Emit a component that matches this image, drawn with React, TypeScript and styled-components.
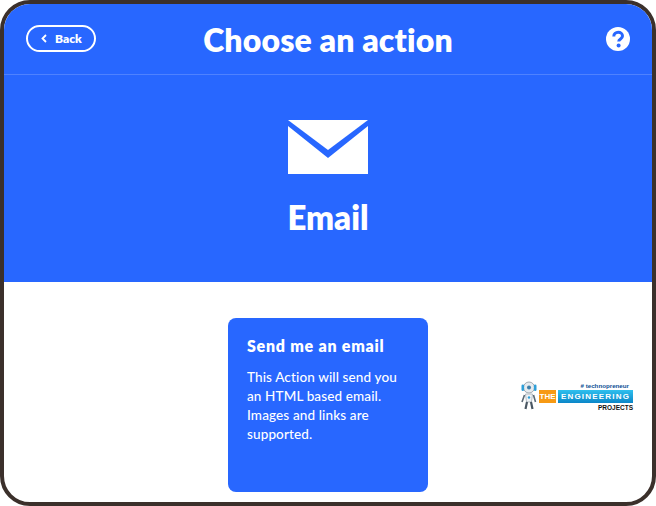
import { createGlobalStyle } from "styled-components";
import styled from "styled-components";

const Global = createGlobalStyle`
  html, body { margin: 0; padding: 0; background: #fff; }
  body { font-family: "Lato", "Open Sans", "Liberation Sans", sans-serif; }
`;

const Frame = styled.div`
  position: relative;
  box-sizing: border-box;
  width: 656px;
  height: 506px;
  border: 4px solid #3b302b;
  border-radius: 30px;
  overflow: hidden;
  background: #fff;
  display: flex;
  flex-direction: column;
`;

const Header = styled.header`
  height: 71px;
  box-sizing: border-box;
  padding: 0 22px;
  background: #2867ff;
  border-bottom: 1px solid #4f82ff;
  display: grid;
  grid-template-columns: 120px 1fr 120px;
  align-items: center;
  color: #fff;
`;

const BackButton = styled.button`
  width: 70px;
  height: 27px;
  margin-top: -2px;
  box-sizing: border-box;
  border: 2px solid #fff;
  border-radius: 14px;
  background: transparent;
  color: #fff;
  padding: 0 0 0 13px;
  display: flex;
  align-items: center;
  gap: 8px;
  font: 800 12px "Lato", sans-serif;
`;

const Title = styled.h1`
  margin: 0 0 -1px;
  text-align: center;
  font: 800 32px "Lato", sans-serif;
  letter-spacing: 0.15px;
`;

const HelpIcon = styled.svg`
  justify-self: end;
  width: 24px;
  height: 24px;
`;

const Hero = styled.section`
  height: 207px;
  background: #2867ff;
  display: flex;
  flex-direction: column;
  align-items: center;
  padding-top: 45px;
  box-sizing: border-box;
  color: #fff;
`;

const MailIcon = styled.svg`
  width: 80px;
  height: 54px;
  display: block;
`;

const HeroName = styled.h2`
  margin: 23px 0 0;
  font: 800 33px/40px "Lato", sans-serif;
`;

const Body = styled.main`
  flex: 1;
  display: flex;
  justify-content: center;
  padding-top: 36px;
`;

const Card = styled.article`
  width: 200px;
  height: 174px;
  box-sizing: border-box;
  padding: 18px 19px;
  background: #2867ff;
  border-radius: 8px;
  color: #fff;
`;

const CardTitle = styled.h3`
  margin: 0 0 12px;
  font: 800 16px/20px "Lato", sans-serif;
  letter-spacing: 0.75px;
`;

const CardText = styled.p`
  margin: 0;
  font: 500 13.5px/19px "Lato", sans-serif;
  letter-spacing: 0.13px;
`;

const Logo = styled.div`
  position: absolute;
  left: 516px;
  top: 377px;
  width: 113px;
  height: 30px;
  display: flex;
  gap: 2px;
`;

const Robot = styled.svg`
  flex: none;
  width: 17px;
  height: 29px;
`;

const LogoText = styled.div`
  flex: 1;
  min-width: 0;
  display: flex;
  flex-direction: column;
  align-items: flex-end;
  font-family: "Liberation Sans", sans-serif;
`;

const Tagline = styled.span`
  margin-right: 4px;
  font-size: 6.2px;
  line-height: 9px;
  font-weight: 700;
  white-space: nowrap;
  color: #0d4f94;
`;

const Banner = styled.div`
  display: flex;
  align-self: stretch;
  height: 13px;
  gap: 2px;
  line-height: 13px;
  font-weight: 700;
  color: #fff;
`;

const BannerThe = styled.span`
  flex: none;
  width: 17px;
  text-align: center;
  background: #f79a14;
  font-size: 8px;
`;

const BannerEngineering = styled.span`
  flex: 1;
  min-width: 0;
  text-align: center;
  font-size: 8px;
  letter-spacing: 1.2px;
  white-space: nowrap;
  background: linear-gradient(#2fc0ee, #0b86c8);
`;

const Projects = styled.span`
  margin-top: 1px;
  font-size: 6.5px;
  line-height: 7px;
  font-weight: 700;
  color: #111;
`;

export default function App() {
  return (
    <>
      <Global />
      <Frame>
        <Header>
          <BackButton>
            <svg width="6" height="9" viewBox="0 0 6 9">
              <path d="M5 1 L1.5 4.5 L5 8" fill="none" stroke="#fff" strokeWidth="1.8" />
            </svg>
            Back
          </BackButton>
          <Title>Choose an action</Title>
          <HelpIcon viewBox="0 0 24 24">
            <circle cx="12" cy="12" r="12" fill="#fff" />
            <path d="M7.8 9.4 C7.8 6.8 9.8 5.2 12.2 5.2 C14.6 5.2 16.5 6.8 16.5 9 C16.5 12 12.7 11.8 12.7 14.6" fill="none" stroke="#2867ff" strokeWidth="3" />
            <circle cx="12.6" cy="18.4" r="2" fill="#2867ff" />
          </HelpIcon>
        </Header>
        <Hero>
          <MailIcon viewBox="0 0 80 54">
            <path d="M0 0 H80 L40 30 Z" fill="#fff" />
            <path d="M0 6 L40 38 L80 6 V54 H0 Z" fill="#fff" />
          </MailIcon>
          <HeroName>Email</HeroName>
        </Hero>
        <Body>
          <Card>
            <CardTitle>Send me an email</CardTitle>
            <CardText>
              This Action will send you
              <br />
              an HTML based email.
              <br />
              Images and links are
              <br />
              supported.
            </CardText>
          </Card>
        </Body>
        <Logo>
          <Robot viewBox="0 0 17 29">
            <circle cx="9" cy="6.5" r="5.5" fill="#e6ebef" stroke="#8a96a0" strokeWidth="0.8" />
            <rect x="1.5" y="3.5" width="2.6" height="6.5" rx="1.3" fill="#2f9fd8" />
            <rect x="13.9" y="3.5" width="2.6" height="6.5" rx="1.3" fill="#2f9fd8" />
            <circle cx="9" cy="6.5" r="2" fill="#3f7fa8" />
            <path d="M5.5 13 H12.5 L11.5 21 H6.5 Z" fill="#eef2f5" stroke="#98a3ad" strokeWidth="0.7" />
            <circle cx="9" cy="16.5" r="1.2" fill="#2f9fd8" />
            <path d="M4.5 14 L2 21 M13.5 14 L15.5 21" stroke="#5b6975" strokeWidth="1.6" />
            <path d="M7 21 L5.5 28 M11 21 L12.5 28" stroke="#4a5763" strokeWidth="2.2" />
          </Robot>
          <LogoText>
            <Tagline># technopreneur</Tagline>
            <Banner>
              <BannerThe>THE</BannerThe>
              <BannerEngineering>ENGINEERING</BannerEngineering>
            </Banner>
            <Projects>PROJECTS</Projects>
          </LogoText>
        </Logo>
      </Frame>
    </>
  );
}
